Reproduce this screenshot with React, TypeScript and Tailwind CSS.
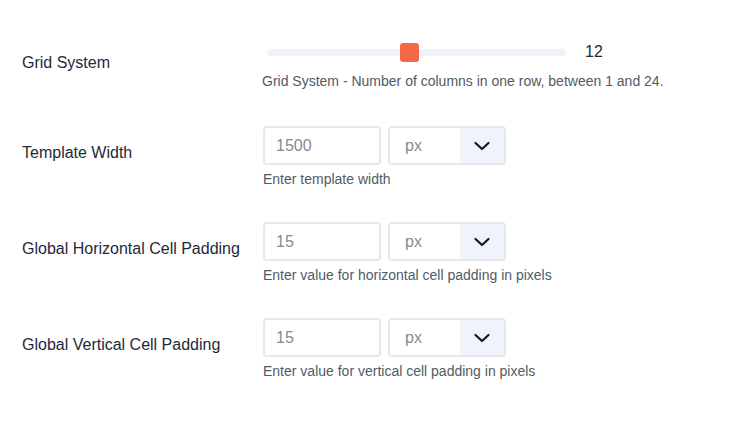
function Chevron() {
  return (
    <svg width="18" height="10" viewBox="0 0 18 10" fill="none" stroke="#111827" strokeWidth="2.2" strokeLinecap="round" strokeLinejoin="round">
      <path d="M2.5 2l6.5 6 6.5-6" />
    </svg>
  );
}

function UnitField({ value, help }: { value: string; help: string }) {
  return (
    <div className="flex flex-col">
      <div className="flex gap-[7px]">
        <div className="flex h-[39px] w-[118px] items-center rounded-[4px] border-2 border-[#e5e9ef] px-[11px] text-[16px] text-[#858b94]">
          {value}
        </div>
        <div className="flex h-[39px] w-[118px] overflow-hidden rounded-[4px] border-2 border-[#e5e9ef]">
          <div className="flex flex-1 items-center px-[15px] text-[16px] text-[#858b94]">px</div>
          <div className="flex w-[44px] items-center justify-center bg-[#f0f4fa]">
            <Chevron />
          </div>
        </div>
      </div>
      <div className="mt-[4px] text-[14px] leading-[20px] text-[#525a66]">{help}</div>
    </div>
  );
}

export default function App() {
  const rows = [
    { label: "Template Width", value: "1500", help: "Enter template width" },
    { label: "Global Horizontal Cell Padding", value: "15", help: "Enter value for horizontal cell padding in pixels" },
    { label: "Global Vertical Cell Padding", value: "15", help: "Enter value for vertical cell padding in pixels" },
  ];
  return (
    <div className="min-h-screen w-[754px] bg-white pl-[22px] pt-[42px]" style={{ fontFamily: "Arial, 'Liberation Sans', sans-serif" }}>
      <div className="flex">
        <div className="w-[240px] pt-[9px] text-[16px] leading-[24px] text-[#1e293b]">Grid System</div>
        <div className="flex flex-col">
          <div className="flex h-[20px] items-center">
            <div className="relative ml-[5px] h-[7px] w-[299px] rounded-full bg-[#eef3f9]">
              <div className="absolute left-[133px] top-[-6px] h-[19px] w-[19px] rounded-[3px] bg-[#f4684a]" />
            </div>
            <div className="ml-[19px] text-[16px] text-[#1f2937]">12</div>
          </div>
          <div className="mt-[9px] text-[14px] leading-[20px] text-[#525a66]">Grid System - Number of columns in one row, between 1 and 24.</div>
        </div>
      </div>
      <div className="mt-[35px] flex flex-col gap-[33px]">
        {rows.map((r) => (
          <div key={r.label} className="flex">
            <div className="w-[241px] pt-[15px] text-[16px] leading-[24px] text-[#1e293b]">{r.label}</div>
            <UnitField value={r.value} help={r.help} />
          </div>
        ))}
      </div>
    </div>
  );
}
